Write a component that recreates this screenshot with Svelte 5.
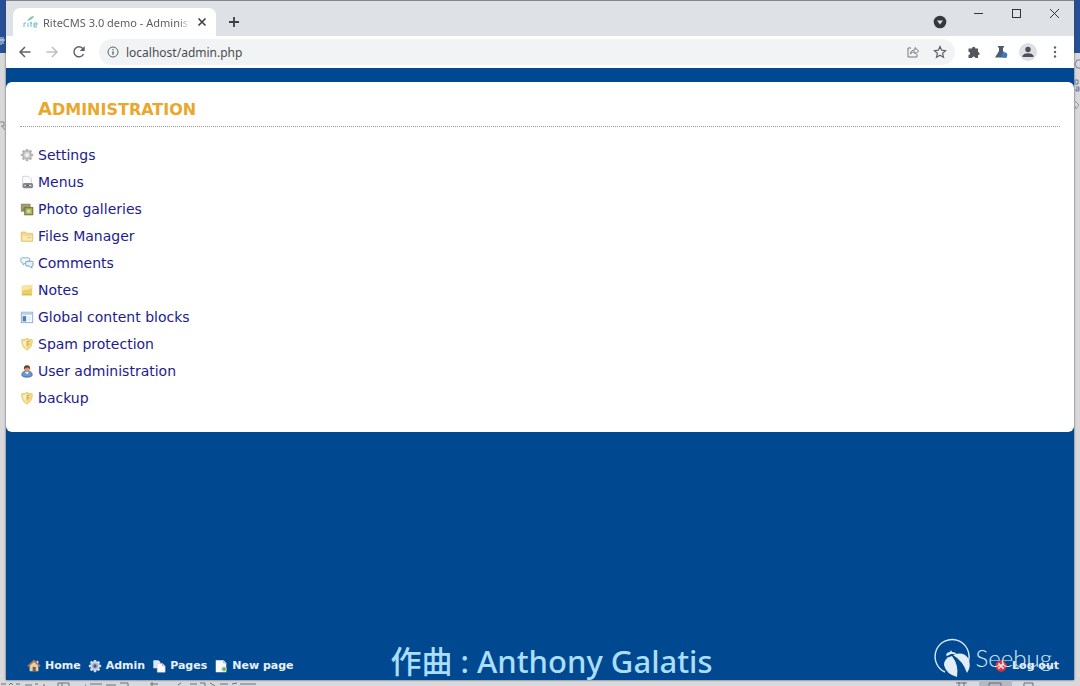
<script lang="ts">
	const menu = [
		{ label: 'Settings', icon: 'gear' },
		{ label: 'Menus', icon: 'menus' },
		{ label: 'Photo galleries', icon: 'photos' },
		{ label: 'Files Manager', icon: 'folder' },
		{ label: 'Comments', icon: 'comments' },
		{ label: 'Notes', icon: 'note' },
		{ label: 'Global content blocks', icon: 'blocks' },
		{ label: 'Spam protection', icon: 'shield' },
		{ label: 'User administration', icon: 'user' },
		{ label: 'backup', icon: 'shield' }
	];

	const shortcuts = [
		{ label: 'Home', icon: 'home' },
		{ label: 'Admin', icon: 'gearLight' },
		{ label: 'Pages', icon: 'pages' },
		{ label: 'New page', icon: 'newPage' }
	];

	const teeth = [0, 45, 90, 135, 180, 225, 270, 315];
	let address = 'localhost/admin.php';
</script>

{#snippet icon(name: string)}
	<svg class="icon" viewBox="0 0 16 16" aria-hidden="true">
		{#if name === 'gear' || name === 'gearLight'}
			<g fill={name === 'gear' ? '#b4b4b4' : '#d3dbe6'}>
				{#each teeth as angle}
					<rect x="6.5" y="1" width="3" height="4" rx="0.6" transform="rotate({angle} 8 8)" />
				{/each}
				<circle cx="8" cy="8" r="5.3" />
			</g>
			<circle cx="8" cy="8" r="3.6" fill={name === 'gear' ? '#d2d2d2' : '#a9b4c6'} />
			<circle cx="8" cy="8" r="1.9" fill={name === 'gear' ? '#f6f6f6' : '#3b5f94'} />
		{:else if name === 'menus'}
			<path d="M3 1.5h7l3 3V14H3z" fill="#fafafa" stroke="#cfcfcf" />
			<rect x="3" y="9" width="12" height="6" rx="2" fill="#85878a" />
			<path d="M5 12h3M10 12h3" stroke="#e4e4e4" stroke-width="1.4" />
			<path d="M7 12h3" stroke="#444" />
		{:else if name === 'photos'}
			<rect x="1.5" y="2.5" width="10" height="8" fill="#a39b72" stroke="#8c8559" />
			<path d="M3 9l3-4 3 4z" fill="#5c7150" />
			<rect x="5.5" y="6.5" width="9" height="8" fill="#a5b66e" stroke="#83763b" stroke-width="1.4" />
			<circle cx="10" cy="10.5" r="2" fill="#d9db9a" />
		{:else if name === 'folder'}
			<path d="M1.5 4.5V3.5h5l1 1.5h7v9h-13z" fill="#f5d98d" stroke="#e4bd69" />
			<path d="M3 8h10l1 5H2.5z" fill="#fbe9b4" />
			<path d="M8 10h4" stroke="#dfb863" />
		{:else if name === 'comments'}
			<path d="M2.5 2h7q1.5 0 1.5 1.5v3Q11 8 9.5 8H6L3.5 10.5V8Q1 8 1 6.5v-3Q1 2 2.5 2z" fill="#eef7fb" stroke="#87aabd" />
			<path d="M8 6h5.5Q15 6 15 7.5V10q0 1.5-1.5 1.5V14L11 11.5H8Q6.5 11.5 6.5 10V7.5Q6.5 6 8 6z" fill="#e6f3fa" stroke="#6d96ad" />
		{:else if name === 'note'}
			<path d="M2 3.5L14 2v12H2z" fill="#edcf68" />
			<path d="M2 3.5L14 2v4L2 9z" fill="#f7e49f" />
			<path d="M2.5 13.5h11" stroke="#d2ab48" />
		{:else if name === 'blocks'}
			<rect x="1.5" y="2.5" width="13" height="12" fill="#f2f8fd" stroke="#8aa7c4" />
			<rect x="2" y="3" width="12" height="2.5" fill="#b9d0e6" />
			<rect x="3" y="7" width="4" height="6" fill="#4b7db4" />
			<path d="M8.5 8.5h4M8.5 11h4" stroke="#d3e1ee" />
		{:else if name === 'shield'}
			<path d="M8 1.5Q10 3.5 14 3q.5 8.5-6 12Q1.5 11.5 2 3q4 .5 6-1.5z" fill="#f4dc8c" stroke="#e5c66b" />
			<path d="M8 3.5V13Q3.5 10 3.5 5 6 5 8 3.5z" fill="#fcf0bd" />
			<path d="M8 5h3M8 8h3M8 5v6" stroke="#c9a149" />
		{:else if name === 'user'}
			<path d="M2 13Q2 8 8 8t6 5q-1 2-6 2t-6-2z" fill="#6b96cf" stroke="#426aa8" />
			<path d="M5.5 9L8 12l2.5-3z" fill="#e9f1fa" />
			<circle cx="8" cy="5.5" r="3.4" fill="#d99b72" />
			<path d="M4.5 6Q4 1.5 8 1.5T11.5 6Q10 3.5 8 4T4.5 6z" fill="#67402b" />
		{:else if name === 'home'}
			<path d="M3 7l5-4.5L13 7v7H3z" fill="#e3d0b0" />
			<path d="M1 8.5L8 2l7 6.5" fill="none" stroke="#b07855" stroke-width="2" />
			<rect x="6.5" y="9" width="3.5" height="5" fill="#805b43" />
			<path d="M11 2h2v3l-2-1z" fill="#ddd" />
		{:else if name === 'pages'}
			<path d="M1.5 1.5h6l2 2v7h-8z" fill="#dfe8f2" />
			<path d="M6 5h6l3 3v7H6z" fill="#fff" stroke="#c3cad7" stroke-width="0.6" />
			<path d="M12 5v3h3" fill="none" stroke="#ca9fb2" />
		{:else if name === 'newPage'}
			<path d="M2 1.5h9l3 3V15H2z" fill="#f6f8fa" />
			<path d="M11 1.5v3h3" fill="none" stroke="#9cb3c6" />
			<circle cx="11.5" cy="11.5" r="3" fill="#b9dda4" />
			<path d="M11.5 9.5v4M9.5 11.5h4" stroke="#4e9450" />
		{:else if name === 'logout'}
			<circle cx="8" cy="8" r="6.5" fill="#dc343e" />
			<path d="M5 5l6 6M11 5l-6 6" stroke="#fbdede" stroke-width="2" />
		{/if}
	</svg>
{/snippet}

<div class="desktop">
	<svg class="scraps left" width="6" height="135" aria-hidden="true">
		<path d="M1 37v8M0 40h5M3 37v7" stroke="#d2dcf0" fill="none" />
		<path d="M0 122h4v4H1M2 126l3 4" stroke="#888" fill="none" />
	</svg>
	<svg class="scraps right" width="6" height="135" aria-hidden="true">
		<path d="M6 60H3l-2 4 2 4h3" stroke="#777f9c" fill="none" />
		<path d="M1 80h3v4H1zM2 87h3v4H2v-2h3" stroke="#66739a" fill="none" />
		<path d="M1 101l4 4-3 4-1-3" stroke="#999" fill="none" />
	</svg>

	<div class="window">
		<header class="titlebar">
			<div class="tab">
				<svg class="favicon" viewBox="0 0 16 16" aria-hidden="true">
					<path d="M2 13V9h2M6 9v4M9 8v5M8 9h2M12 11h3V9h-3v4h3" fill="none" stroke="#6db9cc" />
					<path d="M5 7q3-5 7-5-1 4-7 5z" fill="#88c7b5" />
				</svg>
				<span class="tab-title">RiteCMS 3.0 demo - Administration</span>
				<button class="plain" aria-label="Close tab">
					<svg width="10" height="10" viewBox="0 0 10 10"><path d="M1.5 1.5l7 7M8.5 1.5l-7 7" stroke="#3c4043" stroke-width="1.6" /></svg>
				</button>
			</div>
			<button class="plain new-tab" aria-label="New tab">
				<svg width="12" height="12" viewBox="0 0 12 12"><path d="M6 1v10M1 6h10" stroke="#3c4043" stroke-width="1.8" /></svg>
			</button>
			<button class="plain search-tabs" aria-label="Search tabs">
				<svg width="14" height="14" viewBox="0 0 14 14"><circle cx="7" cy="7" r="6.3" fill="#35383d" /><path d="M4 5.5h6L7 9.5z" fill="#dee1e6" /></svg>
			</button>
			<div class="window-controls">
				<button class="plain" aria-label="Minimize"><svg width="11" height="11"><path d="M1 5.5h9" stroke="#333" /></svg></button>
				<button class="plain" aria-label="Maximize"><svg width="11" height="11"><rect x="1.5" y="1.5" width="8" height="8" fill="none" stroke="#333" /></svg></button>
				<button class="plain" aria-label="Close"><svg width="11" height="11"><path d="M1 1l9 9M10 1l-9 9" stroke="#333" /></svg></button>
			</div>
		</header>

		<div class="toolbar">
			<button class="plain" aria-label="Back">
				<svg width="14" height="14" viewBox="0 0 14 14"><path d="M12.5 7h-10M7 2L2 7l5 5" fill="none" stroke="#5f6368" stroke-width="1.5" /></svg>
			</button>
			<button class="plain" aria-label="Forward">
				<svg width="14" height="14" viewBox="0 0 14 14"><path d="M1.5 7h10M7 2l5 5-5 5" fill="none" stroke="#bcbec2" stroke-width="1.5" /></svg>
			</button>
			<button class="plain" aria-label="Reload">
				<svg width="14" height="14" viewBox="0 0 14 14"><path d="M11.5 9A5 5 0 1 1 10.5 3.3L12 5" fill="none" stroke="#5f6368" stroke-width="1.5" /><path d="M12.7 1v5h-5z" fill="#5f6368" /></svg>
			</button>
			<div class="omnibox">
				<svg width="12" height="12" viewBox="0 0 12 12" aria-hidden="true"><circle cx="6" cy="6" r="5" fill="none" stroke="#5f6368" /><path d="M6 5.3v3.5M6 3v1.3" stroke="#5f6368" stroke-width="1.3" /></svg>
				<input type="text" aria-label="Address" bind:value={address} />
				<button class="plain" aria-label="Share">
					<svg width="14" height="14" viewBox="0 0 14 14"><path d="M5 3H2v9h9V9" fill="none" stroke="#777b80" /><path d="M4.5 9q0-4 4.500-4V2.5L12.700 6 9 9V7Q6 6.5 4.5 9z" fill="none" stroke="#777b80" stroke-linejoin="round" /></svg>
				</button>
				<button class="plain" aria-label="Bookmark this tab">
					<svg width="14" height="14" viewBox="0 0 14 14"><path d="M7 1.5l1.6 3.7 4 .4-3 2.7.9 4L7 10.2l-3.5 2.1.9-4-3-2.7 4-.4z" fill="none" stroke="#5f6368" stroke-width="1.2" /></svg>
				</button>
			</div>
			<button class="plain" aria-label="Extensions">
				<svg width="14" height="14" viewBox="0 0 14 14"><path d="M1.5 3.5H5a1.7 1.7 0 1 1 3.4 0H11V7a1.6 1.6 0 1 1 0 3.2V13H8.3a1.6 1.6 0 0 0-3.2 0H1.5v-3a1.6 1.6 0 0 0 0-3.3z" fill="#53575c" /></svg>
			</button>
			<button class="plain" aria-label="Experiments">
				<svg width="14" height="14" viewBox="0 0 14 14"><path d="M4 1h6v1.5H9V6l4 6.5H1L5 6V2.5H4z" fill="#4c5c70" /><circle cx="10.5" cy="10" r="2.8" fill="#3c78c4" /></svg>
			</button>
			<button class="plain avatar" aria-label="Profile">
				<svg width="14" height="14" viewBox="0 0 14 14"><circle cx="7" cy="4.5" r="2.7" fill="#4b4f58" /><path d="M1.5 12v-1.5Q3 8.3 7 8.3t5.5 2.2V12z" fill="#4b4f58" /></svg>
			</button>
			<button class="plain" aria-label="Menu">
				<svg width="14" height="14" viewBox="0 0 14 14"><g fill="#5f6368"><circle cx="7" cy="2.5" r="1.2" /><circle cx="7" cy="7" r="1.2" /><circle cx="7" cy="11.5" r="1.2" /></g></svg>
			</button>
		</div>

		<div class="page">
			<main class="panel">
				<h1>Administration</h1>
				<ul class="menu">
					{#each menu as item}
						<li>{@render icon(item.icon)}<a href="#{item.icon}">{item.label}</a></li>
					{/each}
				</ul>
			</main>

			<footer class="adminbar">
				<nav>
					{#each shortcuts as item}
						<a href="#{item.icon}">{@render icon(item.icon)}{item.label}</a>
					{/each}
				</nav>
				<a href="#logout">{@render icon('logout')}Log out</a>
			</footer>
		</div>
	</div>

	<p class="caption">作曲 : Anthony Galatis</p>

	<div class="watermark">
		<svg width="38" height="40" viewBox="0 0 38 40" aria-hidden="true">
			<path d="M11 34A17 17 0 1 1 34.5 23" fill="none" stroke="#d9e9fa" stroke-width="1.4" />
			<path d="M18 18Q10 20 10 27q2 9 13 12 2-12-5-21z" fill="#e2edf9" />
			<path d="M19 17q10-4 15 3 4 8-1 15-4-12-14-18z" fill="#e2edf9" />
			<path d="M12 17q1-3 4-3l1-2 1 2q4 0 4 2h-5l-4 2z" fill="#e2edf9" />
		</svg>
		<span>Seebug</span>
	</div>

	<svg class="scraps bottom" width="260" height="5" aria-hidden="true">
		<path d="M1 3h5M9 4l2-2 2 2M16 3h4M25 4h7M35 3h3M43 4h2M58 2h11v4M58 2v4M62 2v4M85 4h1M90 3h12M106 4h10M120 2h8v4M150 3h8M152 1v4M178 4l3-2M190 3h7M200 2h5v3M210 2l5 3M220 3h8M232 3l5-1M240 3h16" fill="none" stroke="#707070" />
	</svg>
	<svg class="scraps tray" width="130" height="6" aria-hidden="true">
		<rect x="29" width="33" height="6" fill="#b7b9be" />
		<path d="M6 3h11M9 2v4M14 2v4M39 3h12v3M39 3v3M74 3h9v3M74 3v3" fill="none" stroke="#686c73" />
	</svg>
</div>

<style>
	:global(body) {
		margin: 0;
	}

	.desktop {
		position: relative;
		box-sizing: border-box;
		display: flex;
		min-height: 100vh;
		padding: 0 6px 6px;
		overflow: hidden;
		background: linear-gradient(#254f96 53px, #d9d9dc 53px);
		font-family: 'DejaVu Sans', sans-serif;
	}

	.scraps {
		position: absolute;
	}

	.left {
		top: 0;
		left: 0;
	}

	.right {
		top: 0;
		right: 0;
	}

	.bottom {
		bottom: 0;
		left: 0;
	}

	.tray {
		right: 0;
		bottom: 0;
	}

	.window {
		flex: 1;
		display: flex;
		flex-direction: column;
		min-width: 0;
		box-shadow: 0 0 2px #444;
	}

	.plain {
		display: flex;
		align-items: center;
		justify-content: center;
		padding: 0;
		border: 0;
		background: none;
	}

	.titlebar {
		display: flex;
		align-items: center;
		height: 36px;
		border-top: 1px solid #85878c;
		background: #dee1e6;
		box-sizing: border-box;
	}

	.tab {
		align-self: flex-end;
		box-sizing: border-box;
		display: flex;
		align-items: center;
		gap: 5px;
		width: 203px;
		height: 28px;
		margin-left: 7px;
		padding: 0 9px;
		border-radius: 7px 7px 0 0;
		background: #fff;
	}

	.favicon {
		flex: none;
		width: 16px;
		height: 16px;
	}

	.tab-title {
		flex: 1;
		overflow: hidden;
		color: #5a5d62;
		font: 11px 'Noto Sans', sans-serif;
		white-space: nowrap;
		mask-image: linear-gradient(to right, #000 92%, transparent);
	}

	.tab .plain {
		margin-left: 2px;
	}

	.new-tab {
		margin: 7px 0 0 12px;
	}

	.search-tabs {
		margin: 7px 0 0 auto;
	}

	.window-controls {
		align-self: flex-start;
		display: flex;
		gap: 27px;
		margin: 7px 14px 0 26px;
	}

	.toolbar {
		display: flex;
		align-items: center;
		gap: 13px;
		height: 32px;
		padding: 0 12px;
		background: #fff;
	}

	.omnibox {
		flex: 1;
		display: flex;
		align-items: center;
		gap: 7px;
		height: 26px;
		margin-right: -1px;
		padding: 0 8px;
		border-radius: 13px;
		background: #f1f3f4;
	}

	.omnibox input {
		flex: 1;
		min-width: 0;
		padding: 0;
		border: 0;
		outline: 0;
		background: none;
		color: #4a4d51;
		font: 12px 'Noto Sans', sans-serif;
	}

	.omnibox .plain + .plain {
		margin-left: 6px;
	}

	.avatar {
		width: 18px;
		height: 18px;
		margin: 0 -2px;
		border-radius: 50%;
		background: #dcdfe6;
	}

	.page {
		flex: 1;
		display: flex;
		flex-direction: column;
		padding-top: 14px;
		background: #00488f;
	}

	.panel {
		padding: 14px 14px 21px;
		border-radius: 6px;
		background: #fff;
	}

	h1 {
		margin: 0 0 14px;
		padding: 0 18px 4px;
		border-bottom: 1px dotted #999;
		color: #e9a72c;
		font-size: 16px;
		line-height: 25px;
		text-transform: uppercase;
	}

	h1::first-letter {
		font-size: 18px;
	}

	.menu {
		margin: 0;
		padding: 0;
		list-style: none;
	}

	.menu li {
		display: flex;
		align-items: center;
		gap: 4px;
		height: 27px;
		font-size: 14px;
	}

	.menu a {
		color: #1c1c8c;
		text-decoration: none;
	}

	.icon {
		flex: none;
		width: 14px;
		height: 14px;
	}

	.adminbar {
		display: flex;
		justify-content: space-between;
		margin-top: auto;
		padding: 0 15px 6px 21px;
		font-size: 11px;
		font-weight: bold;
		line-height: 16px;
	}

	.adminbar nav {
		display: flex;
		gap: 7px;
	}

	.adminbar a {
		display: flex;
		align-items: center;
		gap: 4px;
		color: #e8f1fa;
		text-decoration: none;
	}

	.caption {
		position: absolute;
		right: 0;
		bottom: 3px;
		left: 0;
		margin: 0 0 0 23px;
		color: #a9defc;
		font: 500 31px/44px 'Noto Sans', 'Noto Sans CJK SC', sans-serif;
		text-align: center;
		pointer-events: none;
	}

	.watermark {
		position: absolute;
		right: 28px;
		bottom: 8px;
		display: flex;
		align-items: center;
		gap: 4px;
		color: #d9e9fa;
		font: 300 24px/32px Lato, sans-serif;
		pointer-events: none;
	}
</style>
